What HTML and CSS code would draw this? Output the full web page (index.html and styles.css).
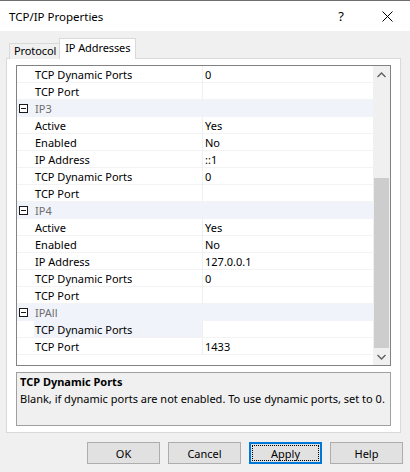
FILE: index.html
```html
<!DOCTYPE html>
<html>
<head>
<meta charset="utf-8">
<link rel="stylesheet" href="styles.css">
</head>
<body>
<div class="window">
  <div class="titlebar">
    <span class="title">TCP/IP Properties</span>
    <span class="tb-btn">?</span>
    <span class="tb-btn"><svg width="11" height="11" viewBox="0 0 11 11"><path d="M0.5 0.5L10.5 10.5M10.5 0.5L0.5 10.5" stroke="#000" stroke-width="1" fill="none"/></svg></span>
  </div>
  <div class="content">
    <div class="tabs">
      <div class="tab">Protocol</div>
      <div class="tab active">IP Addresses</div>
    </div>
    <div class="panel">
      <div class="grid">
        <div class="rows">
          <div class="row"><span class="gutter"></span><span class="name">TCP Dynamic Ports</span><span class="value">0</span></div>
          <div class="row"><span class="gutter"></span><span class="name">TCP Port</span><span class="value"></span></div>
          <div class="row cat"><span class="gutter"><span class="box"></span></span><span class="name">IP3</span></div>
          <div class="row"><span class="gutter"></span><span class="name">Active</span><span class="value">Yes</span></div>
          <div class="row"><span class="gutter"></span><span class="name">Enabled</span><span class="value">No</span></div>
          <div class="row"><span class="gutter"></span><span class="name">IP Address</span><span class="value">::1</span></div>
          <div class="row"><span class="gutter"></span><span class="name">TCP Dynamic Ports</span><span class="value">0</span></div>
          <div class="row"><span class="gutter"></span><span class="name">TCP Port</span><span class="value"></span></div>
          <div class="row cat"><span class="gutter"><span class="box"></span></span><span class="name">IP4</span></div>
          <div class="row"><span class="gutter"></span><span class="name">Active</span><span class="value">Yes</span></div>
          <div class="row"><span class="gutter"></span><span class="name">Enabled</span><span class="value">No</span></div>
          <div class="row"><span class="gutter"></span><span class="name">IP Address</span><span class="value">127.0.0.1</span></div>
          <div class="row"><span class="gutter"></span><span class="name">TCP Dynamic Ports</span><span class="value">0</span></div>
          <div class="row"><span class="gutter"></span><span class="name">TCP Port</span><span class="value"></span></div>
          <div class="row cat"><span class="gutter"><span class="box"></span></span><span class="name">IPAll</span></div>
          <div class="row selected"><span class="gutter"></span><span class="name">TCP Dynamic Ports</span><span class="value"></span></div>
          <div class="row"><span class="gutter"></span><span class="name">TCP Port</span><span class="value">1433</span></div>
        </div>
        <div class="scrollbar">
          <div class="arrow"><svg width="9" height="6" viewBox="0 0 9 6"><path d="M0.5 5L4.5 1L8.5 5" stroke="#606060" stroke-width="1.4" fill="none"/></svg></div>
          <div class="track"><div class="thumb"></div></div>
          <div class="arrow"><svg width="9" height="6" viewBox="0 0 9 6"><path d="M0.5 1L4.5 5L8.5 1" stroke="#606060" stroke-width="1.4" fill="none"/></svg></div>
        </div>
      </div>
      <div class="desc">
        <div class="desc-title">TCP Dynamic Ports</div>
        <div class="desc-text">Blank, if dynamic ports are not enabled. To use dynamic ports, set to 0.</div>
      </div>
    </div>
    <div class="buttons">
      <button class="btn">OK</button>
      <button class="btn">Cancel</button>
      <button class="btn default"><span class="focus">Apply</span></button>
      <button class="btn">Help</button>
    </div>
  </div>
</div>
</body>
</html>
```
FILE: styles.css
```css
html, body {
  margin: 0;
  padding: 0;
}
body {
  background: #f0f0f0;
  font-family: "Noto Sans", "Open Sans", sans-serif;
  font-size: 11px;
  color: #000;
}
.window {
  width: 410px;
  height: 472px;
  box-sizing: border-box;
  border-top: 1px solid #6e6e6e;
  overflow: hidden;
}
.titlebar {
  height: 30px;
  background: #fff;
  display: flex;
  align-items: center;
  padding-left: 9px;
  font-size: 11.5px;
}
.title {
  flex: 1;
}
.tb-btn {
  width: 46px;
  height: 30px;
  display: flex;
  align-items: center;
  justify-content: center;
  font-size: 13px;
}
.content {
  padding: 7px 0 0 6px;
}
.tabs {
  display: flex;
  align-items: flex-end;
  padding-left: 3px;
  height: 21px;
  margin-bottom: -1px;
}
.tab {
  height: 15px;
  line-height: 14px;
  padding: 0 3px 0 4px;
  border: 1px solid #d9d9d9;
  border-bottom: none;
  border-right: none;
  background: #f0f0f0;
  box-sizing: content-box;
  letter-spacing: -0.1px;
}
.tab.active {
  height: 20px;
  line-height: 18px;
  padding: 0 5px 0 5px;
  background: #fff;
  border-right: 1px solid #d9d9d9;
  position: relative;
  z-index: 1;
}
.panel {
  width: 395px;
  height: 375px;
  box-sizing: border-box;
  border: 1px solid #d9d9d9;
  background: #fff;
  padding: 6px 0 0 9px;
}
.grid {
  width: 375px;
  height: 301px;
  box-sizing: border-box;
  border: 1px solid #828282;
  display: flex;
  background: #fff;
}
.rows {
  width: 356px;
}
.row {
  display: grid;
  grid-template-columns: 17px 168px 171px;
  height: 17px;
  box-sizing: border-box;
  border-bottom: 1px solid #f3f3f3;
  line-height: 17px;
  white-space: nowrap;
}
.gutter {
  display: flex;
  align-items: center;
  padding-left: 2px;
}
.name {
  padding-left: 1px;
  overflow: hidden;
}
.value {
  border-left: 1px solid #f0f0f0;
  padding-left: 2px;
}
.row.cat {
  background: #f0f3f9;
  border-bottom-color: #f0f3f9;
}
.row.cat .name {
  color: #6d6d6d;
  grid-column: 2 / 4;
}
.row.selected .name {
  background: #f0f3f9;
}
.box {
  width: 7px;
  height: 7px;
  border: 1px solid #1a1a1a;
  position: relative;
  background: #fff;
}
.box::after {
  content: "";
  position: absolute;
  left: 1px;
  right: 1px;
  top: 3px;
  height: 1px;
  background: #1a1a1a;
}
.scrollbar {
  width: 17px;
  display: flex;
  flex-direction: column;
  background: #f0f0f0;
}
.arrow {
  height: 17px;
  display: flex;
  align-items: center;
  justify-content: center;
}
.track {
  flex: 1;
  display: flex;
  flex-direction: column;
  justify-content: flex-end;
  padding: 0 1px;
}
.thumb {
  height: 170px;
  background: #cdcdcd;
}
.desc {
  margin-top: 6px;
  width: 375px;
  height: 54px;
  box-sizing: border-box;
  border: 1px solid #a0a0a0;
  background: #f0f0f0;
  padding: 1px 3px;
}
.desc-title {
  font-weight: bold;
  line-height: 15px;
}
.desc-text {
  margin-top: 2px;
  line-height: 15px;
}
.buttons {
  display: flex;
  justify-content: flex-end;
  gap: 8px;
  padding: 9px 7px 0 0;
}
.btn {
  width: 73px;
  height: 22px;
  box-sizing: border-box;
  border: 1px solid #adadad;
  background: #e1e1e1;
  font-family: inherit;
  font-size: 11px;
  color: #000;
  padding: 0;
  display: flex;
  align-items: center;
  justify-content: center;
}
.btn.default {
  border: 2px solid #0078d7;
}
.focus {
  display: flex;
  align-items: center;
  justify-content: center;
  width: 65px;
  height: 14px;
  border: 1px dotted #000;
}
```
